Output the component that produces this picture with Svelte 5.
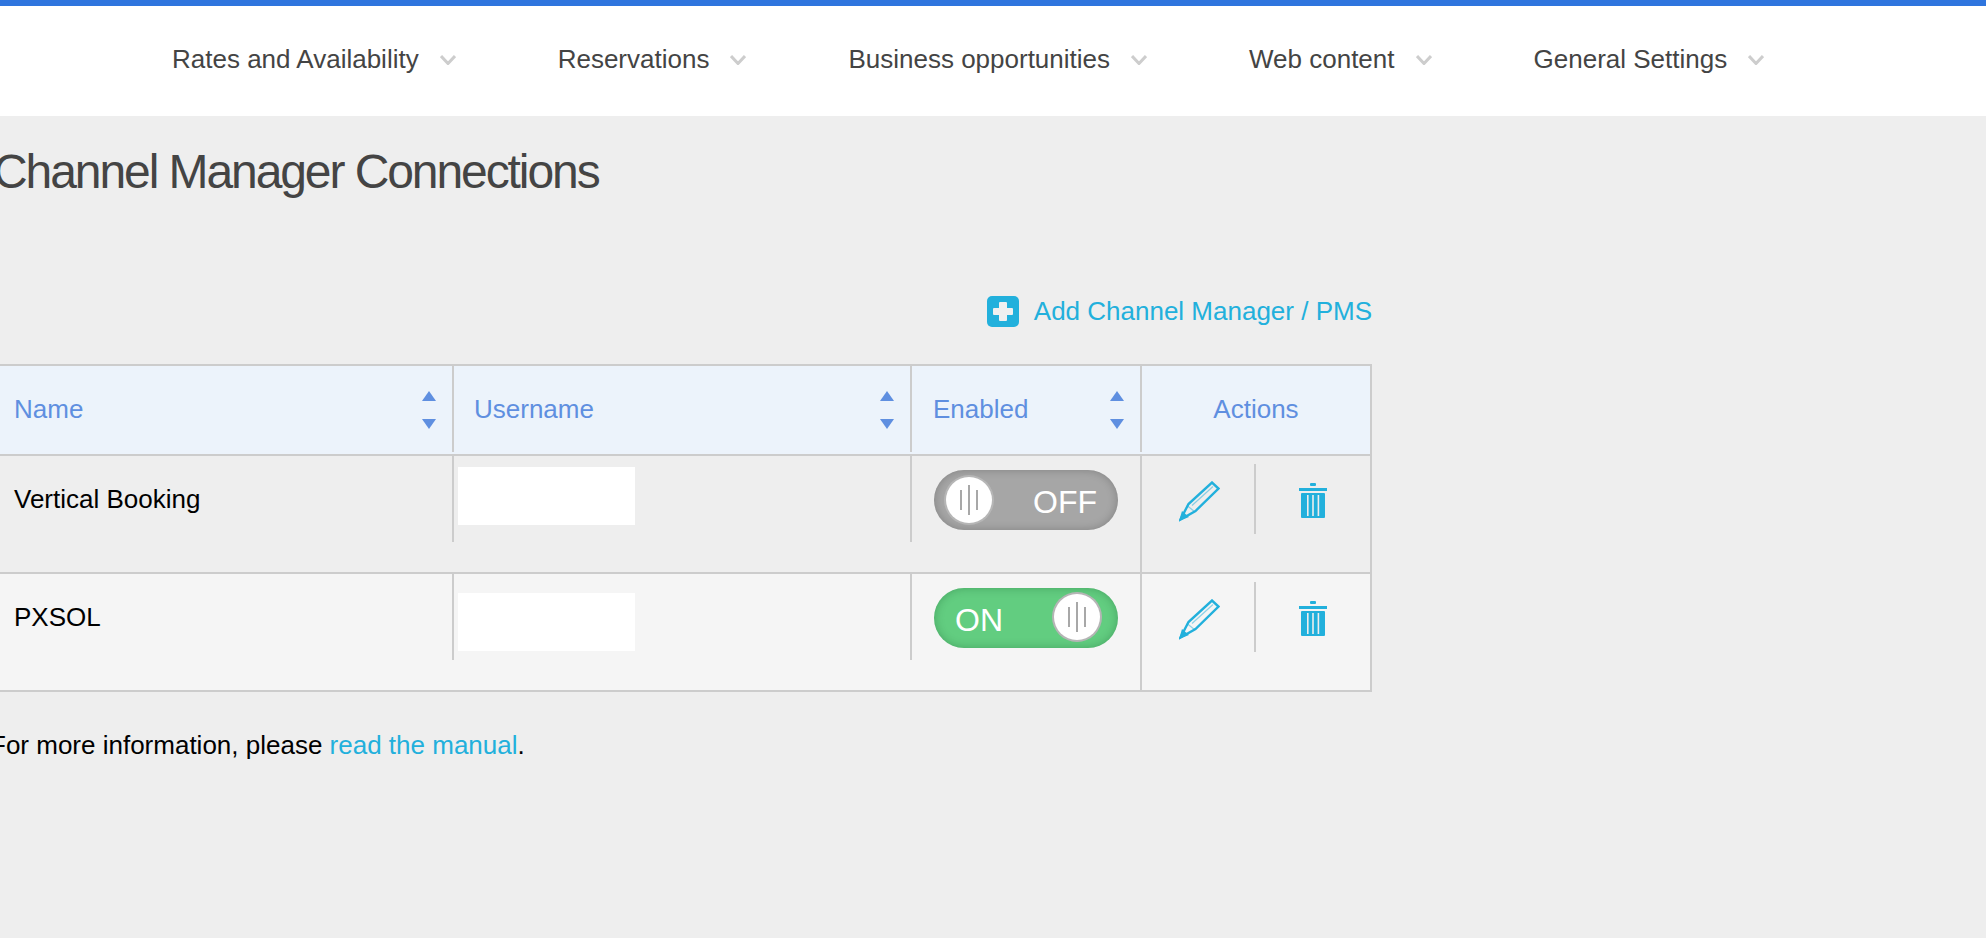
<script lang="ts">
	const menu = ['Rates and Availability', 'Reservations', 'Business opportunities', 'Web content', 'General Settings'];
	const columns = [
		{ label: 'Name', sort: true },
		{ label: 'Username', sort: true },
		{ label: 'Enabled', sort: true },
		{ label: 'Actions', sort: false }
	];
	const rows = [
		{ name: 'Vertical Booking', enabled: false },
		{ name: 'PXSOL', enabled: true }
	];
</script>

<header class="nav">
	{#each menu as item}
		<a class="nav-item" href="#top">
			{item}
			<svg class="chev" width="16" height="10" viewBox="0 0 16 10" aria-hidden="true">
				<path d="M1 1l7 7.5L15 1" fill="none" stroke="#cdcdcd" stroke-width="3" />
			</svg>
		</a>
	{/each}
</header>

<main class="page">
	<h1>Channel Manager Connections</h1>

	<div class="add-row">
		<a class="add" href="#top">
			<svg width="32" height="31" viewBox="0 0 32 31" aria-hidden="true">
				<rect width="32" height="31" rx="5" fill="#22b0dc" />
				<path d="M13 6h6a1 1 0 0 1 1 1v5h5a1 1 0 0 1 1 1v5a1 1 0 0 1-1 1h-5v5a1 1 0 0 1-1 1h-6a1 1 0 0 1-1-1v-5H7a1 1 0 0 1-1-1v-5a1 1 0 0 1 1-1h5V7a1 1 0 0 1 1-1z" fill="#f0f0f0" />
			</svg>
			Add Channel Manager / PMS
		</a>
	</div>

	<div class="table">
		<div class="row head">
			{#each columns as col}
				<div class="th" class:center={!col.sort}>
					<span>{col.label}</span>
					{#if col.sort}
						<svg class="sort" width="14" height="38" viewBox="0 0 14 38" aria-hidden="true">
							<path d="M7 0l7 10H0z" fill="#5f8fe0" />
							<path d="M0 28h14L7 38z" fill="#5f8fe0" />
						</svg>
					{/if}
				</div>
			{/each}
		</div>

		{#each rows as row, i}
			<div class="row" class:alt={i % 2 === 1}>
				<div class="td name">{row.name}</div>
				<div class="td user"><div class="masked"></div></div>
				<div class="td state">
					<div class="toggle" class:on={row.enabled}>
						<span class="toggle-label">{row.enabled ? 'ON' : 'OFF'}</span>
						<span class="knob"><i></i><i class="mid"></i><i></i></span>
					</div>
				</div>
				<div class="td actions">
					<div class="action edit">
						<svg width="41" height="41" viewBox="0 0 41 41" aria-hidden="true">
							<path d="M1.5 38.5L9.5 23 33 1.5l6.5 6L16.5 30z" fill="none" stroke="#22b0dc" stroke-width="2.4" />
							<path d="M0 40l3-10 7 6z" fill="#22b0dc" />
							<path d="M8 24.5l8 6.5M13 24.5L34 5.5" fill="none" stroke="#22b0dc" stroke-width="1.2" opacity="0.5" />
						</svg>
					</div>
					<div class="action trash">
						<svg width="28" height="35" viewBox="0 0 28 35" aria-hidden="true">
							<rect x="11" y="0" width="6" height="3" rx="1" fill="#22b0dc" />
							<rect x="0" y="5" width="28" height="3" fill="#22b0dc" />
							<rect x="2" y="10" width="24" height="25" rx="1" fill="#22b0dc" />
							<rect x="8" y="12" width="1.6" height="21" fill="#eee" />
							<rect x="13.2" y="12" width="1.6" height="21" fill="#eee" />
							<rect x="18.6" y="12" width="1.6" height="21" fill="#eee" />
						</svg>
					</div>
				</div>
			</div>
		{/each}
	</div>

	<p class="note">For more information, please <a href="#top">read the manual</a>.</p>
</main>

<style>
	:global(body) {
		background: #eeeeee;
		font-family: 'Liberation Sans', Arial, sans-serif;
		overflow: hidden;
	}
	a {
		color: #22b0dc;
		text-decoration: none;
	}
	.nav {
		display: flex;
		align-items: center;
		gap: 102px;
		height: 106px;
		padding: 0 0 4px 172px;
		background: #fff;
		border-top: 6px solid #2f75de;
	}
	.nav-item {
		display: flex;
		align-items: center;
		gap: 21px;
		font-size: 26px;
		color: #444;
		white-space: nowrap;
	}
	.chev {
		margin-top: 1px;
	}
	.page {
		margin-left: -24px;
		width: 1396px;
	}
	h1 {
		margin: 0;
		padding-top: 28px;
		font-size: 48px;
		line-height: 56px;
		font-weight: 400;
		color: #444;
		letter-spacing: -2.08px;
		padding-left: 17px;
	}
	.add-row {
		display: flex;
		justify-content: flex-end;
		margin-top: 95px;
	}
	.add {
		display: flex;
		align-items: center;
		gap: 15px;
		font-size: 26px;
		height: 32px;
	}
	.table {
		margin-top: 37px;
		border: solid #ccc;
		border-width: 2px 2px 0 0;
	}
	.row {
		display: grid;
		grid-template-columns: 478px 458px 230px 1fr;
		height: 118px;
		background: #eeeeee;
		border-bottom: 2px solid #ccc;
		box-sizing: border-box;
		font-size: 26px;
	}
	.row.alt {
		background: #f5f5f5;
	}
	.row.head {
		height: 90px;
		background: #ecf3fb;
		color: #5f8fe0;
	}
	.th {
		display: flex;
		align-items: center;
		justify-content: space-between;
		height: 86px;
		padding: 0 16px 0 21px;
		border-right: 2px solid #ccc;
		box-sizing: border-box;
	}
	.th:first-child {
		padding-left: 38px;
	}
	.th:nth-child(2) {
		padding-left: 20px;
	}
	.th:last-child {
		border-right: 0;
	}
	.th.center {
		justify-content: center;
		padding: 0;
	}
	.sort {
		margin-top: 2px;
	}
	.td {
		box-sizing: border-box;
	}
	.name,
	.user {
		height: 86px;
		border-right: 2px solid #ccc;
	}
	.name {
		padding: 25px 0 0 38px;
		line-height: 36px;
		color: #000;
	}
	.user {
		padding: 11px 0 0 4px;
	}
	.alt .user {
		padding-top: 19px;
	}
	.masked {
		width: 177px;
		height: 58px;
		background: #fff;
	}
	.state {
		padding: 14px 0 0 22px;
		border-right: 2px solid #ccc;
	}
	.toggle {
		position: relative;
		display: flex;
		align-items: center;
		justify-content: flex-end;
		width: 184px;
		height: 60px;
		padding: 4px 21px 0;
		box-sizing: border-box;
		border-radius: 30px;
		background: #a6a6a6;
		box-shadow: inset 0 0 10px rgba(0, 0, 0, 0.22);
		color: #fff;
		font-size: 32px;
	}
	.toggle.on {
		justify-content: flex-start;
		background: #62cd80;
		box-shadow: inset 0 0 10px rgba(0, 60, 20, 0.28);
	}
	.knob {
		position: absolute;
		left: 12px;
		top: 7px;
		display: flex;
		align-items: center;
		justify-content: center;
		gap: 6px;
		width: 46px;
		height: 46px;
		box-sizing: border-box;
		border-radius: 50%;
		background: #fff;
		box-shadow: 0 0 0 2px rgba(190, 190, 190, 0.7);
	}
	.on .knob {
		left: auto;
		right: 18px;
		top: 6px;
		box-shadow: 0 0 0 2px #b5b5b5;
	}
	.knob i {
		width: 2px;
		height: 20px;
		background: #a8a8a8;
	}
	.knob i.mid {
		height: 30px;
	}
	.actions {
		display: grid;
		grid-template-columns: 114px 1fr;
		padding-top: 8px;
	}
	.action {
		height: 70px;
		box-sizing: border-box;
	}
	.edit {
		padding: 17px 0 0 37px;
		border-right: 2px solid #ccc;
	}
	.trash {
		padding: 19px 0 0 43px;
	}
	.note {
		margin: 35px 0 0 14px;
		font-size: 26px;
		line-height: 36px;
		color: #000;
	}
</style>
